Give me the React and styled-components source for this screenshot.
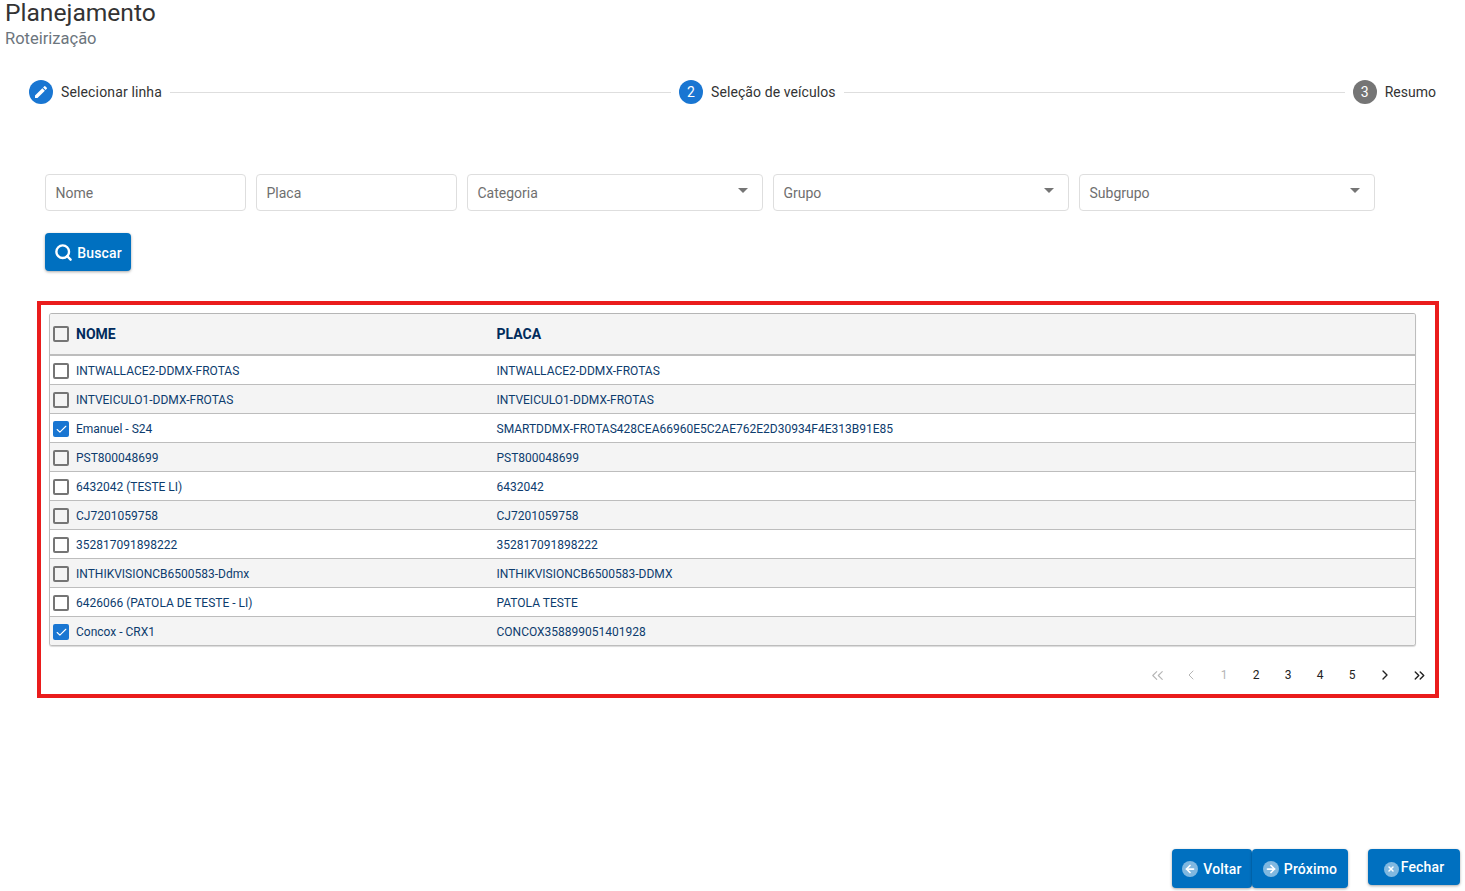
import React from 'react';
import styled, {createGlobalStyle} from 'styled-components';
import {Search, ArrowLeft, ArrowRight, X, Check, ChevronLeft, ChevronRight, ChevronsLeft, ChevronsRight} from 'lucide-react';

const GlobalStyle = createGlobalStyle`
  html, body {
    margin: 0;
    padding: 0;
    background: #fff;
    font-family: "Roboto", "Liberation Sans", sans-serif;
    overflow: hidden;
  }
  * { box-sizing: border-box; }
`;

const Page = styled.div`
  width: 1465px;
  height: 891px;
  display: flex;
  flex-direction: column;
`;

const Header = styled.header`
  padding-left: 5px;
  height: 49px;
`;

const Title = styled.h1`
  margin: 0;
  height: 28px;
  font-size: 24.6px;
  line-height: 26px;
  font-weight: 400;
  color: #333;
`;

const Subtitle = styled.h2`
  margin: 0;
  font-size: 16.5px;
  line-height: 22px;
  font-weight: 400;
  color: #6c757d;
`;

const Stepper = styled.div`
  display: flex;
  align-items: center;
  margin: 31px 29px 0;
  height: 24px;
`;

const Step = styled.div`
  display: flex;
  align-items: center;
  gap: 8px;
  font-size: 14px;
  letter-spacing: ${p => p.$spacing || 0}px;
  color: #333;
  white-space: nowrap;
`;

const StepCircle = styled.span`
  width: 24px;
  height: 24px;
  border-radius: 50%;
  display: flex;
  align-items: center;
  justify-content: center;
  color: #fff;
  font-size: 14px;
  background: ${p => (p.$done ? '#1976d2' : '#757575')};
`;

const StepLine = styled.div`
  flex: 1;
  height: 1px;
  margin: 0 8px;
  background: #dedede;
`;

const Filters = styled.form`
  display: flex;
  gap: 10px;
  margin: 70px 0 0 45px;
`;

const Field = styled.div`
  width: ${p => p.$w}px;
  height: 37px;
  border: 1px solid #dedede;
  border-radius: 4px;
  display: flex;
  align-items: center;
  justify-content: space-between;
  padding: 0 14px 0 9.5px;
  font-size: 14px;
  color: #6f6f6f;
`;

const Caret = styled.span`
  width: 0;
  height: 0;
  margin: -4px 0 0;
  border-left: 5px solid transparent;
  border-right: 5px solid transparent;
  border-top: 5px solid #757575;
`;

const BlueButton = styled.button`
  height: ${p => p.$h || 39}px;
  width: ${p => p.$w}px;
  border: 0;
  padding: ${p => (p.$flat ? 0 : '1px 0 0')};
  border-radius: 4px;
  background: #0070c0;
  color: #fff;
  font-family: inherit;
  font-size: 14px;
  font-weight: 500;
  letter-spacing: 0.15px;
  display: flex;
  align-items: center;
  justify-content: center;
  gap: ${p => p.$gap || 5}px;
  box-shadow: 0 1px 3px rgba(0, 0, 0, 0.35);
`;

const SearchRow = styled.div`
  margin: 22px 0 0 45px;
`;

const Marked = styled.section`
  margin: 30px 26px 0 37px;
  height: 397px;
  border: 4px solid #ea1c1c;
  padding: 8px 19px 0 8px;
`;

const Table = styled.div`
  border: 1px solid #bdbdbd;
  border-top-color: #b5b5b5;
  border-radius: 3px;
  box-shadow: 0 1px 1px rgba(0, 0, 0, 0.15);
  overflow: hidden;
`;

const Row = styled.div`
  display: grid;
  grid-template-columns: 446.5px 1fr;
  align-items: center;
  height: ${p => (p.$head ? 42 : p.$first ? 28 : 29)}px;
  padding-top: ${p => (p.$head ? 0 : 2)}px;
  background: ${p => (p.$odd ? '#f4f4f4' : '#fff')};
  border-top: ${p => (p.$head || p.$first ? 0 : '1px solid #bdbdbd')};
  border-bottom: ${p => (p.$head ? '2px solid #bdbdbd' : 0)};
  color: ${p => (p.$head ? '#002b5c' : '#0d3c6e')};
  font-size: ${p => (p.$head ? 14 : 12)}px;
  font-weight: ${p => (p.$head ? 700 : 400)};
`;

const NameCell = styled.div`
  display: flex;
  align-items: center;
  gap: 7px;
  padding-left: 3px;
`;

const Box = styled.span`
  width: 16px;
  height: 16px;
  border-radius: 2px;
  display: flex;
  align-items: center;
  justify-content: center;
  border: ${p => (p.$checked ? 0 : '2px solid #757575')};
  background: ${p => (p.$checked ? '#1976d2' : 'transparent')};
  color: #fff;
`;

const Pager = styled.nav`
  display: flex;
  justify-content: flex-end;
  align-items: center;
  margin: 19px -20px 0 0;
  height: 20px;
`;

const PageItem = styled.span`
  width: ${p => (p.$arrow ? 34 : 32)}px;
  display: flex;
  justify-content: center;
  font-size: 12px;
  color: ${p => (p.$off ? '#b5b5b5' : '#222')};
`;

const Footer = styled.footer`
  margin-top: auto;
  height: 42px;
  padding: 0 5px 0 0;
  display: flex;
  justify-content: flex-end;
  align-items: flex-start;
`;

const FooterGap = styled.div`
  width: 20px;
`;

const RoundIcon = styled.span`
  width: ${p => p.$s}px;
  height: ${p => p.$s}px;
  margin-top: ${p => p.$drop || 0}px;
  border-radius: 50%;
  background: rgba(255, 255, 255, 0.5);
  color: #fff;
  display: flex;
  align-items: center;
  justify-content: center;
`;

const rows = [
    ['INTWALLACE2-DDMX-FROTAS', 'INTWALLACE2-DDMX-FROTAS'],
    ['INTVEICULO1-DDMX-FROTAS', 'INTVEICULO1-DDMX-FROTAS'],
    ['Emanuel - S24', 'SMARTDDMX-FROTAS428CEA66960E5C2AE762E2D30934F4E313B91E85', true],
    ['PST800048699', 'PST800048699'],
    ['6432042 (TESTE LI)', '6432042'],
    ['CJ7201059758', 'CJ7201059758'],
    ['352817091898222', '352817091898222'],
    ['INTHIKVISIONCB6500583-Ddmx', 'INTHIKVISIONCB6500583-DDMX'],
    ['6426066 (PATOLA DE TESTE - LI)', 'PATOLA TESTE'],
    ['Concox - CRX1', 'CONCOX358899051401928', true],
];

const Checkbox = ({checked}) => (
    <Box $checked={checked}>{checked && <Check size={13} strokeWidth={2} />}</Box>
);

const EditIcon = () => (
    <svg width="16" height="16" viewBox="0 0 24 24" fill="#fff">
        <path d="M3 17.25V21h3.75L17.81 9.94l-3.75-3.75L3 17.25zM20.71 7.04a1 1 0 0 0 0-1.41l-2.34-2.34a1 1 0 0 0-1.41 0l-1.83 1.83 3.75 3.75 1.83-1.83z" />
    </svg>
);

export default function App() {
    return (
        <Page>
            <GlobalStyle />
            <Header>
                <Title>Planejamento</Title>
                <Subtitle>Roteirização</Subtitle>
            </Header>

            <Stepper>
                <Step $spacing={0.14}>
                    <StepCircle $done><EditIcon /></StepCircle>
                    Selecionar linha
                </Step>
                <StepLine />
                <Step $spacing={0.08}><StepCircle $done>2</StepCircle>Seleção de veículos</Step>
                <StepLine />
                <Step><StepCircle>3</StepCircle>Resumo</Step>
            </Stepper>

            <Filters>
                <Field $w={201}>Nome</Field>
                <Field $w={201}>Placa</Field>
                <Field $w={296}>Categoria<Caret /></Field>
                <Field $w={296}>Grupo<Caret /></Field>
                <Field $w={296}>Subgrupo<Caret /></Field>
            </Filters>

            <SearchRow>
                <BlueButton type="button" $w={86} $h={38} $gap={4}>
                    <Search size={19} strokeWidth={3} />Buscar
                </BlueButton>
            </SearchRow>

            <Marked>
                <Table>
                    <Row $head $odd>
                        <NameCell><Checkbox />NOME</NameCell>
                        <div>PLACA</div>
                    </Row>
                    {rows.map(([nome, placa, checked], i) => (
                        <Row key={nome} $odd={i % 2 === 1} $first={i === 0}>
                            <NameCell><Checkbox checked={checked} />{nome}</NameCell>
                            <div>{placa}</div>
                        </Row>
                    ))}
                </Table>
                <Pager>
                    <PageItem $off $arrow><ChevronsLeft size={19} strokeWidth={1.4} /></PageItem>
                    <PageItem $off $arrow><ChevronLeft size={16} strokeWidth={1.5} /></PageItem>
                    <PageItem $off>1</PageItem>
                    <PageItem>2</PageItem>
                    <PageItem>3</PageItem>
                    <PageItem>4</PageItem>
                    <PageItem>5</PageItem>
                    <PageItem $arrow><ChevronRight size={16} strokeWidth={2} /></PageItem>
                    <PageItem $arrow><ChevronsRight size={17} strokeWidth={2} /></PageItem>
                </Pager>
            </Marked>

            <Footer>
                <BlueButton type="button" $w={80} $gap={5}>
                    <RoundIcon $s={16}><ArrowLeft size={12} strokeWidth={3.5} /></RoundIcon>Voltar
                </BlueButton>
                <BlueButton type="button" $w={96} $gap={5}>
                    <RoundIcon $s={16}><ArrowRight size={12} strokeWidth={3.5} /></RoundIcon>Próximo
                </BlueButton>
                <FooterGap />
                <BlueButton type="button" $w={92} $h={36} $gap={2} $flat>
                    <RoundIcon $s={15} $drop={4}><X size={8} strokeWidth={4.5} /></RoundIcon>Fechar
                </BlueButton>
            </Footer>
        </Page>
    );
}
